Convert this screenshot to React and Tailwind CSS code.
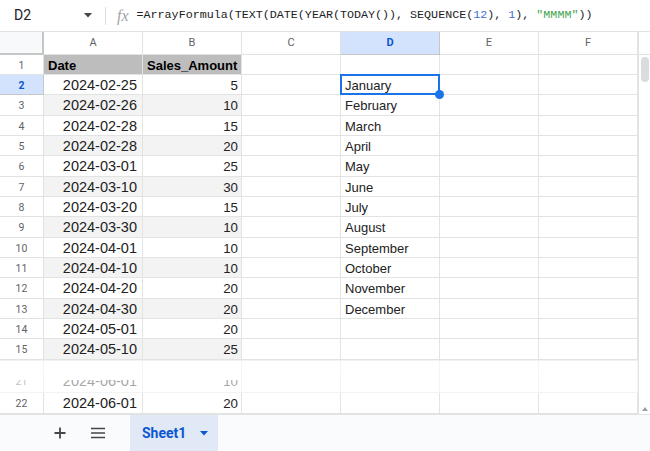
import React from 'react';

const data = [
  ['2024-02-25', '5', 'January'],
  ['2024-02-26', '10', 'February'],
  ['2024-02-28', '15', 'March'],
  ['2024-02-28', '20', 'April'],
  ['2024-03-01', '25', 'May'],
  ['2024-03-10', '30', 'June'],
  ['2024-03-20', '15', 'July'],
  ['2024-03-30', '10', 'August'],
  ['2024-04-01', '10', 'September'],
  ['2024-04-10', '10', 'October'],
  ['2024-04-20', '20', 'November'],
  ['2024-04-30', '20', 'December'],
  ['2024-05-01', '20', ''],
  ['2024-05-10', '25', ''],
];

const cols = ['A', 'B', 'C', 'D', 'E', 'F'];
const cellFont = { fontFamily: '"Liberation Sans", Arial, sans-serif' };

function Caret({ className }) {
  return (
    <svg width="8" height="5" viewBox="0 0 8 5" className={className}>
      <path d="M0 0 L8 0 L4 4.5 Z" fill="currentColor" />
    </svg>
  );
}

function FormulaBar() {
  return (
    <div className="h-[32px] shrink-0 border-b border-[#e1e3e1] flex items-center bg-white" style={{ fontFamily: 'Roboto, sans-serif' }}>
      <div className="w-[105px] flex items-center pl-[14px] pr-[13px]">
        <span className="text-[14px] text-[#202124] flex-1">D2</span>
        <Caret className="text-[#444746]" />
      </div>
      <div className="w-px h-[18px] bg-[#dadce0]" />
      <span className="ml-[11px] mr-[8px] text-[16px] italic text-[#a0a4a8]" style={{ fontFamily: '"Liberation Serif", serif' }}>fx</span>
      <span className="text-[11.7px] text-[#202124] whitespace-pre" style={{ fontFamily: '"Liberation Mono", monospace' }}>
        {'=ArrayFormula(TEXT(DATE(YEAR(TODAY()), SEQUENCE('}
        <span className="text-[#3b6fd4]">12</span>
        {'), '}
        <span className="text-[#3b6fd4]">1</span>
        {'), '}
        <span className="text-[#3fa34a]">"MMMM"</span>
        {'))'}
      </span>
    </div>
  );
}

function HeaderRow() {
  return (
    <div className="h-[23px] shrink-0 flex" style={{ fontFamily: 'Roboto, sans-serif' }}>
      <div className="w-[44px] h-[23px] bg-[#f8f9fa] border-r-2 border-b-2 border-[#c4c7c5]" />
      {cols.map((c) => (
        <div
          key={c}
          className={
            c === 'D'
              ? 'w-[99px] h-[23px] flex items-center justify-center border-r border-b border-[#c4c7c5] bg-[#d3e3fd] text-[#0b57d0] font-bold text-[11px]'
              : 'w-[99px] h-[23px] flex items-center justify-center border-r border-b border-[#e1e3e1] bg-white text-[#5f6368] text-[11px]'
          }
        >
          {c}
        </div>
      ))}
    </div>
  );
}

function Row({ n, a, b, d, h, header }) {
  const odd = n % 2 === 1 && n > 1;
  const selected = n === 2;
  const abBg = header ? 'bg-[#bdbdbd]' : odd ? 'bg-[#f3f3f3]' : 'bg-white';
  return (
    <div className={selected ? 'h-[20px] flex shrink-0 relative z-20' : h === 21 ? 'h-[21px] flex shrink-0' : 'h-[20px] flex shrink-0'}>
      <div
        className={
          selected
            ? 'w-[44px] border-r border-b border-[#c4c7c5] bg-[#d3e3fd] text-[#0b57d0] font-bold text-[10.5px] flex items-center justify-center pt-[2px]'
            : 'w-[44px] border-r border-b border-[#e1e3e1] bg-white text-[#5f6368] text-[10.5px] flex items-center justify-center pt-[2px]'
        }
        style={{ fontFamily: 'Roboto, sans-serif' }}
      >
        {n}
      </div>
      <div
        className={
          header
            ? `w-[99px] border-r border-b border-[#e2e3e3] ${abBg} flex items-center pl-[4px] pt-[2px] text-[13px] font-bold text-black`
            : `w-[99px] border-r border-b border-[#e2e3e3] ${abBg} flex items-center justify-end pr-[5px] pt-[2px] text-[14.5px] text-[#222]`
        }
        style={cellFont}
      >
        {a}
      </div>
      <div
        className={
          header
            ? `w-[99px] border-r border-b border-[#e2e3e3] ${abBg} flex items-center pl-[4px] pt-[2px] text-[13px] font-bold text-black`
            : `w-[99px] border-r border-b border-[#e2e3e3] ${abBg} flex items-center justify-end pr-[3px] pt-[2px] text-[13.3px] text-[#222]`
        }
        style={cellFont}
      >
        {b}
      </div>
      <div className="w-[99px] border-r border-b border-[#e2e3e3] bg-white" />
      <div className={selected ? 'w-[99px] border-r border-b border-[#e2e3e3] bg-white flex items-center pl-[4px] pt-[2px] text-[13px] text-[#222] relative z-20' : 'w-[99px] border-r border-b border-[#e2e3e3] bg-white flex items-center pl-[4px] pt-[2px] text-[13px] text-[#222]'} style={cellFont}>
        {d}
        {selected && (
          <>
            <div className="absolute left-[-1px] top-[-1px] right-[-1px] bottom-[-1px] border-2 border-[#1a73e8]" />
            <div className="absolute right-[-5px] bottom-[-5px] w-[9px] h-[9px] rounded-full bg-[#1a73e8]" />
          </>
        )}
      </div>
      <div className="w-[99px] border-r border-b border-[#e2e3e3] bg-white" />
      <div className="w-[99px] border-r border-b border-[#e2e3e3] bg-white" />
    </div>
  );
}

function Grid() {
  const heights = [20, 20, 21];
  return (
    <div className="flex flex-col w-[638px]">
      <HeaderRow />
      <Row n={1} a="Date" b="Sales_Amount" d="" h={20} header />
      {data.map((r, i) => (
        <Row key={i} n={i + 2} a={r[0]} b={r[1]} d={r[2]} h={heights[(i + 1) % 3]} />
      ))}
      {/* torn gap */}
      <div className="h-[20px] flex shrink-0 bg-white border-t border-[#f1f1f1]">
        <div className="w-[44px] border-r border-[#f4f4f4]" />
        {cols.map((c) => (
          <div key={c} className="w-[99px] border-r border-[#f4f4f4]" />
        ))}
      </div>
      <div className="h-[13px] flex shrink-0 overflow-hidden items-end border-b border-[#e2e3e3] opacity-40">
        <div className="w-[44px] h-[13px] border-r border-[#e1e3e1] flex items-end justify-center overflow-hidden">
          <div className="h-[20px] shrink-0 flex items-center text-[10.5px] text-[#5f6368]" style={{ fontFamily: 'Roboto, sans-serif' }}>21</div>
        </div>
        <div className="w-[99px] h-[13px] border-r border-[#e2e3e3] flex items-end justify-end pr-[5px] overflow-hidden" style={cellFont}>
          <div className="h-[20px] shrink-0 flex items-center text-[14.5px] text-[#222]">2024-06-01</div>
        </div>
        <div className="w-[99px] h-[13px] border-r border-[#e2e3e3] flex items-end justify-end pr-[3px] overflow-hidden" style={cellFont}>
          <div className="h-[20px] shrink-0 flex items-center text-[13.3px] text-[#222]">10</div>
        </div>
        <div className="w-[99px] h-[13px] border-r border-[#e2e3e3]" />
        <div className="w-[99px] h-[13px] border-r border-[#e2e3e3]" />
        <div className="w-[99px] h-[13px] border-r border-[#e2e3e3]" />
        <div className="w-[99px] h-[13px] border-r border-[#e2e3e3]" />
      </div>
      <Row n={22} a="2024-06-01" b="20" d="" h={21} />
    </div>
  );
}

function Scrollbar() {
  return (
    <div className="w-[12px] flex flex-col border-l border-[#e1e3e1] bg-white relative">
      <div className="h-[23px] shrink-0 border-b border-[#e1e3e1]" />
      <div className="mt-[2px] ml-[2px] w-[8px] h-[25px] rounded-full bg-[#dadce0]" />
      <div className="flex-1" />
      <div className="h-[8px] flex items-center justify-center mb-[1px]">
        <svg width="6" height="4" viewBox="0 0 6 4"><path d="M0 4 L3 0 L6 4 Z" fill="#9aa0a6" /></svg>
      </div>
    </div>
  );
}

function BottomBar() {
  return (
    <div className="h-[37px] shrink-0 border-t border-[#e1e3e1] bg-[#f9fbfd] flex items-stretch" style={{ fontFamily: 'Roboto, sans-serif' }}>
      <div className="w-[50px]" />
      <div className="w-[20px] flex items-center justify-center">
        <svg width="14" height="14" viewBox="0 0 14 14"><path d="M7 1.5 V12.5 M1.5 7 H12.5" stroke="#444746" strokeWidth="1.8" /></svg>
      </div>
      <div className="w-[18px]" />
      <div className="w-[20px] flex items-center justify-center">
        <svg width="16" height="12" viewBox="0 0 16 12"><path d="M1 1.5 H15 M1 6 H15 M1 10.5 H15" stroke="#444746" strokeWidth="1.6" /></svg>
      </div>
      <div className="w-[22px]" />
      <div className="w-[88px] bg-[#e1e9f7] flex items-center pl-[12px]">
        <span className="text-[14px] font-bold text-[#0b57d0]">Sheet1</span>
        <Caret className="ml-[14px] text-[#0b57d0]" />
      </div>
    </div>
  );
}

export default function App() {
  return (
    <div className="w-[650px] h-[451px] bg-white overflow-hidden flex flex-col">
      <FormulaBar />
      <div className="flex flex-1 min-h-0">
        <Grid />
        <Scrollbar />
      </div>
      <BottomBar />
    </div>
  );
}
